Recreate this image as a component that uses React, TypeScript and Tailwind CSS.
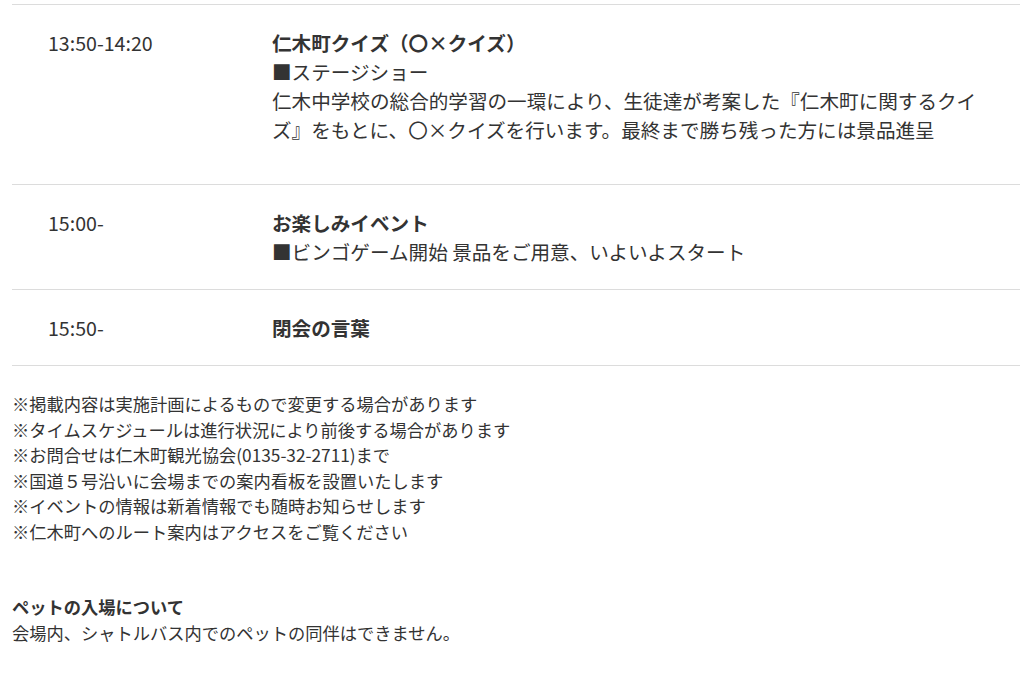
import React from "react";

const rows = [
  {
    time: "13:50-14:20",
    title: "仁木町クイズ（〇×クイズ）",
    lines: ["■ステージショー"],
    desc: "仁木中学校の総合的学習の一環により、生徒達が考案した『仁木町に関するクイズ』をもとに、〇×クイズを行います。最終まで勝ち残った方には景品進呈",
  },
  {
    time: "15:00-",
    title: "お楽しみイベント",
    lines: ["■ビンゴゲーム開始 景品をご用意、いよいよスタート"],
  },
  { time: "15:50-", title: "閉会の言葉", lines: [] as string[] },
];

const notes = [
  "※掲載内容は実施計画によるもので変更する場合があります",
  "※タイムスケジュールは進行状況により前後する場合があります",
  "※お問合せは仁木町観光協会(0135-32-2711)まで",
  "※国道５号沿いに会場までの案内看板を設置いたします",
  "※イベントの情報は新着情報でも随時お知らせします",
  "※仁木町へのルート案内はアクセスをご覧ください",
];

export default function App() {
  return (
    <div
      className="w-[1024px] h-[677px] overflow-hidden bg-white text-[#333] pl-[12px] pr-[4px] pt-[4px]"
      style={{ fontFamily: '"Noto Sans CJK JP", "Noto Sans", sans-serif' }}
    >
      <div className="border-t border-[#dcdcdc]">
        {rows.map((r, i) => (
          <div
            key={i}
            className="flex border-b border-[#dcdcdc] py-[23px] text-[19.6px] leading-[29px]"
          >
            <div className="w-[260px] shrink-0 pl-[36px]">{r.time}</div>
            <div className="w-[725px]">
              <div className="font-bold">{r.title}</div>
              {r.lines.map((l, j) => (
                <div key={j}>{l}</div>
              ))}
              {r.desc && <div className="mb-[17px]">{r.desc}</div>}
            </div>
          </div>
        ))}
      </div>
      <div className="mt-[25px] text-[17.25px] leading-[25.6px]">
        {notes.map((n, i) => (
          <div key={i}>{n}</div>
        ))}
      </div>
      <div className="mt-[49px] text-[17.25px] leading-[26px]">
        <div className="font-bold">ペットの入場について</div>
        <div>会場内、シャトルバス内でのペットの同伴はできません。</div>
      </div>
    </div>
  );
}
